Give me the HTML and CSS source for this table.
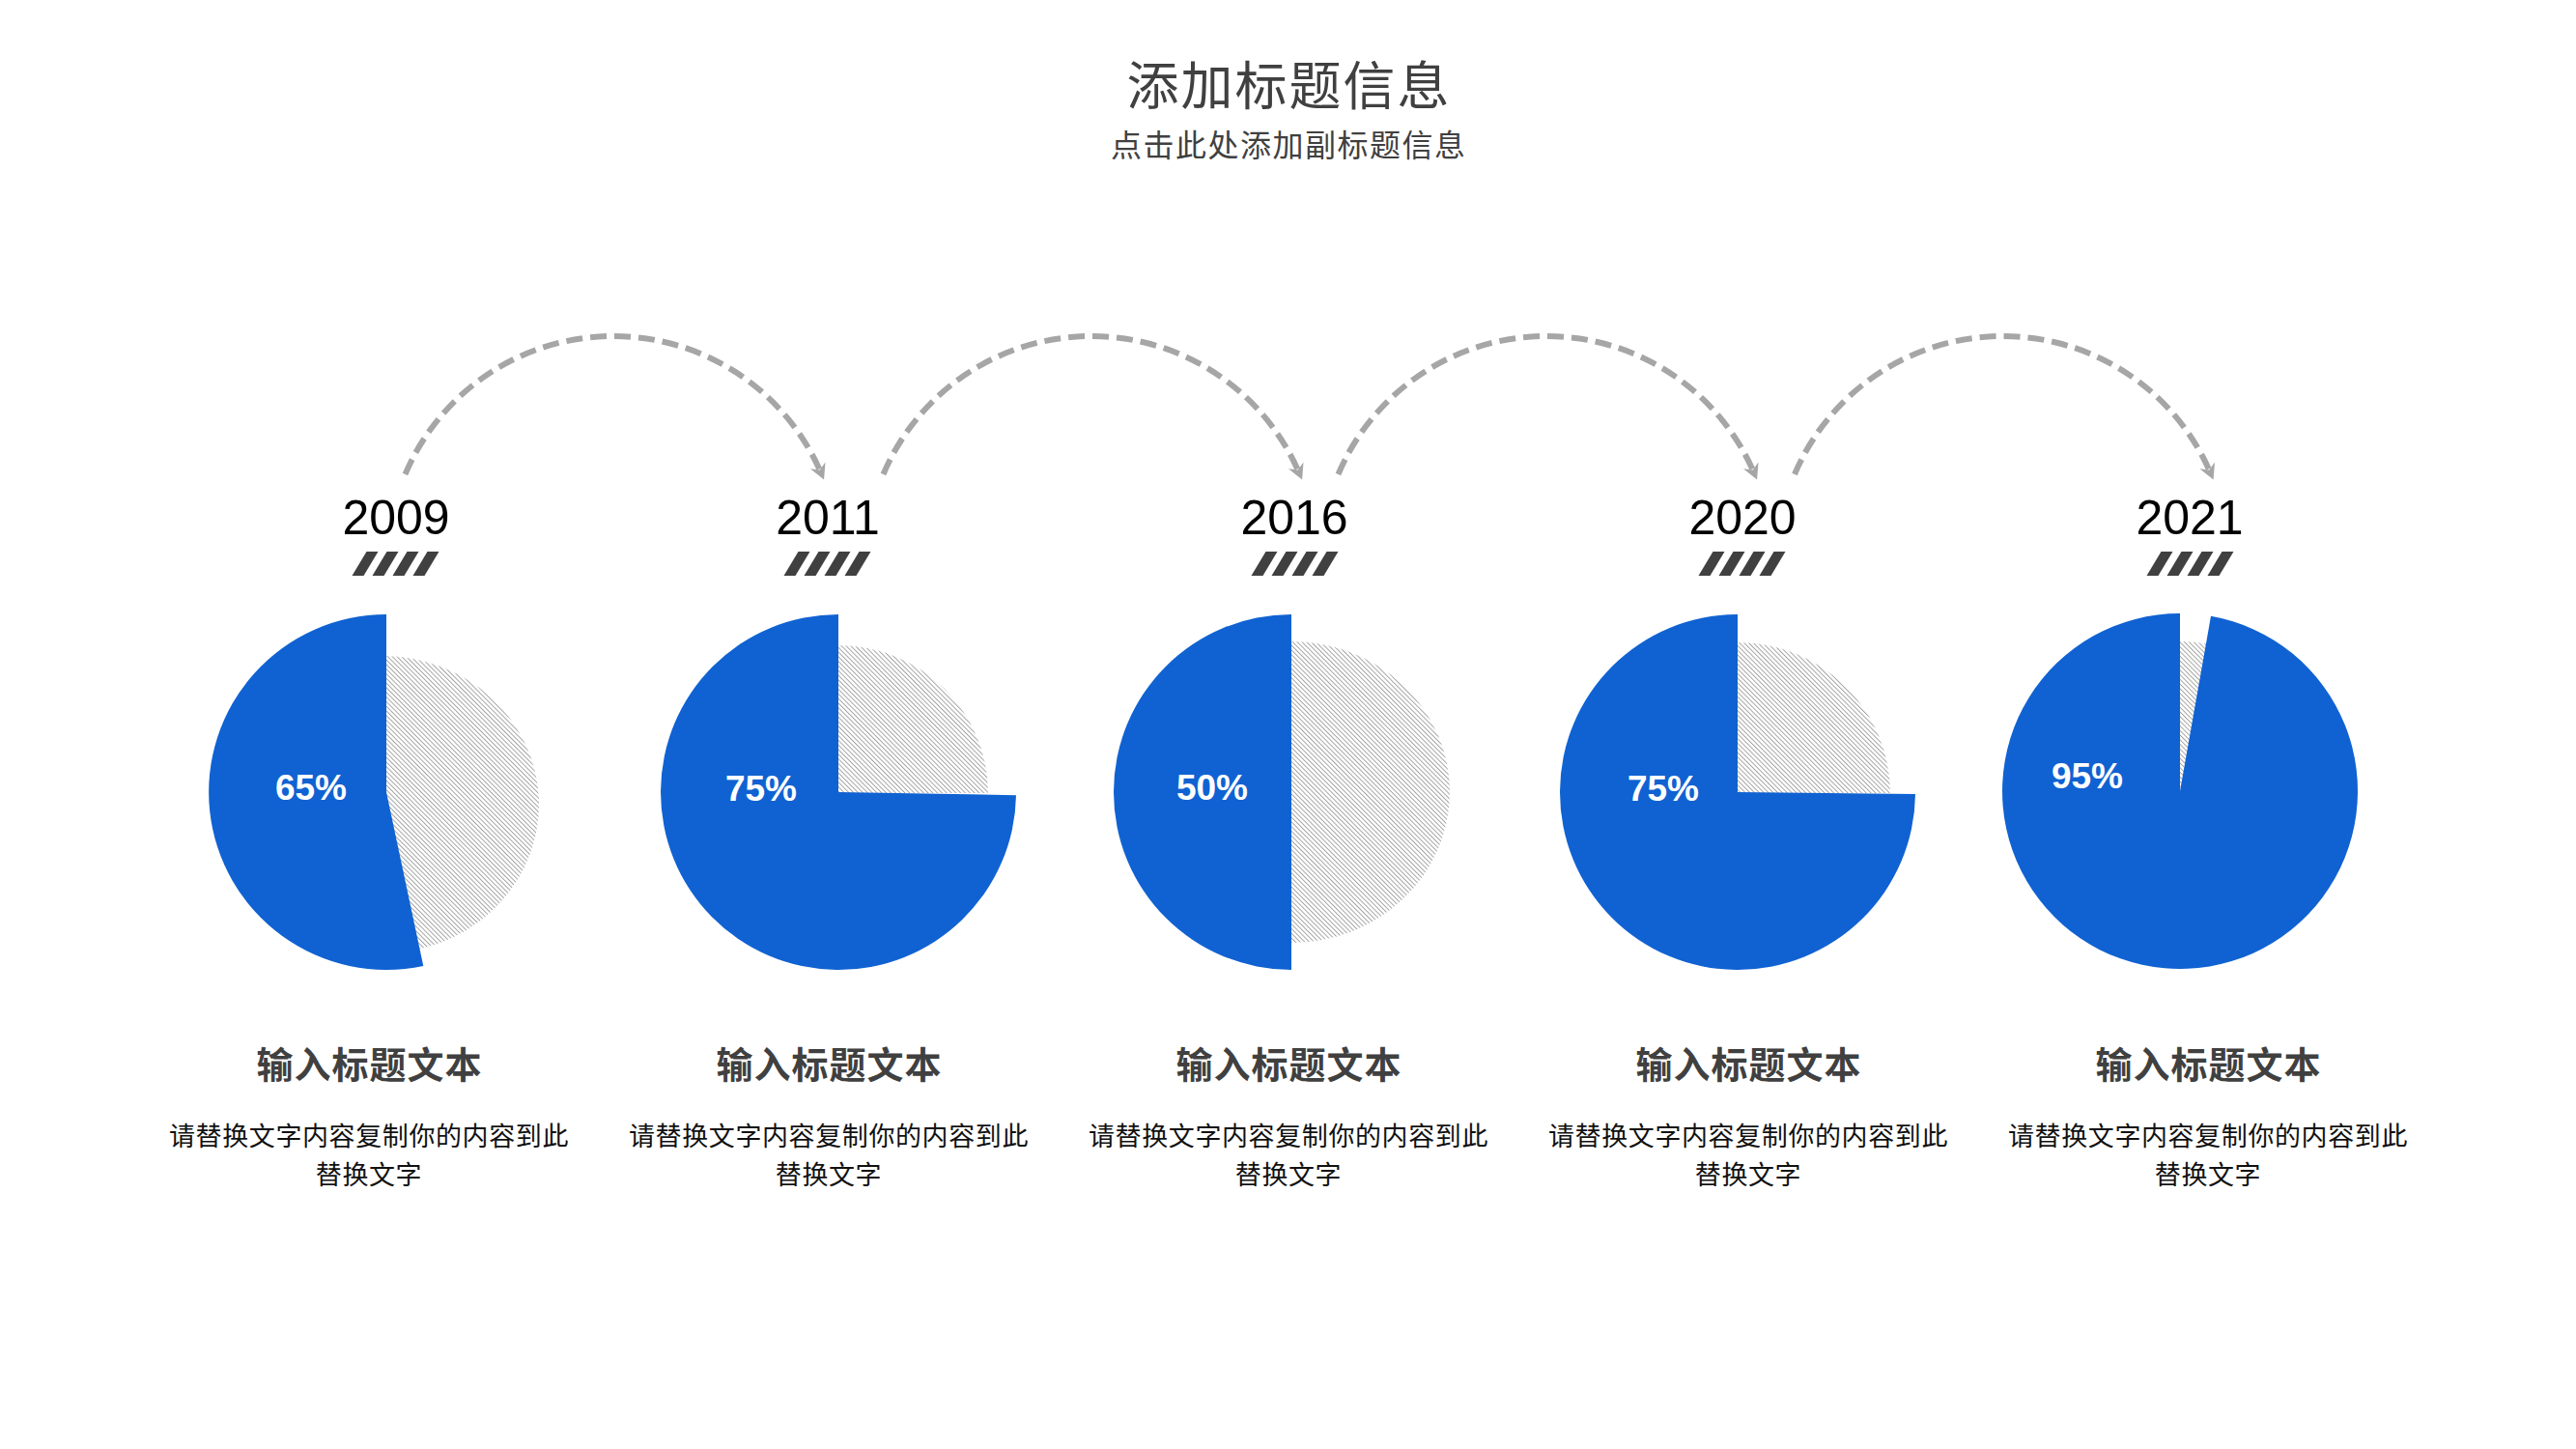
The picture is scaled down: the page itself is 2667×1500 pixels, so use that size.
FILE: index.html
```html
<!DOCTYPE html>
<html lang="zh-CN">
<head>
<meta charset="utf-8">
<title>添加标题信息</title>
<link rel="stylesheet" href="styles.css">
</head>
<body>
<main class="slide">
  <header class="head">
    <h1 class="title">添加标题信息</h1>
    <p class="subtitle">点击此处添加副标题信息</p>
  </header>

  <svg class="chart" width="2667" height="740" viewBox="0 300 2667 740" xmlns="http://www.w3.org/2000/svg">
    <defs>
      <pattern id="hatch" patternUnits="userSpaceOnUse" width="3.4" height="3.4" patternTransform="rotate(-45)">
        <line x1="0.5" y1="0" x2="0.5" y2="3.4" stroke="#8f8f8f" stroke-width="0.8"/>
      </pattern>
      <marker id="arrow" markerUnits="userSpaceOnUse" viewBox="-10 -10 20 20" markerWidth="20" markerHeight="20" refX="0" refY="0" orient="auto">
        <path d="M8 0 L-8 -8.5 L-3 0 L-8 8.5 Z" fill="#a6a6a6"/>
      </marker>
      <g id="stripes">
        <polygon points="-30.5,571 -18.5,571 -33.5,596 -45.5,596"/>
        <polygon points="-9.5,571 2.5,571 -12.5,596 -24.5,596"/>
        <polygon points="11.5,571 23.5,571 8.5,596 -3.5,596"/>
        <polygon points="32.5,571 44.5,571 29.5,596 17.5,596"/>
      </g>
    </defs>

    <g class="arcs">
      <path d="M419.5 491 A234 234 0 0 1 849.9 489.2"/>
      <path d="M914.5 491 A234 234 0 0 1 1344.9 489.2"/>
      <path d="M1385.5 491 A234 234 0 0 1 1815.9 489.2"/>
      <path d="M1858 491 A234 234 0 0 1 2288.4 489.2"/>
    </g>

    <g class="years">
      <text x="410" y="553">2009</text>
      <text x="857" y="553">2011</text>
      <text x="1340" y="553">2016</text>
      <text x="1804" y="553">2020</text>
      <text x="2267" y="553">2021</text>
    </g>

    <g class="stripes">
      <use href="#stripes" x="410"/>
      <use href="#stripes" x="857"/>
      <use href="#stripes" x="1341"/>
      <use href="#stripes" x="1804"/>
      <use href="#stripes" x="2268"/>
    </g>

    <g class="pies">
      <path class="rest" d="M400 833 L400 679 A162 154 0 0 1 414 986 Z"/>
      <path class="part" d="M400 820 L438.3 1000 A184 184 0 1 1 400 636 Z"/>

      <path class="rest" d="M868 821 L868 668 A155 153 0 0 1 1023 821 Z"/>
      <path class="part" d="M868 820 L1052 823.2 A184 184 0 1 1 868 636 Z"/>

      <path class="rest" d="M1337 820 L1337 664 A164 156 0 0 1 1337 976 Z"/>
      <path class="part" d="M1337 1004 A184 184 0 0 1 1337 636 Z"/>

      <path class="rest" d="M1799 821 L1799 665 A158 156 0 0 1 1957 821 Z"/>
      <path class="part" d="M1799 820 L1983 822 A184 184 0 1 1 1799 636 Z"/>

      <path class="rest" d="M2257 819 L2257 664 A155 155 0 0 1 2286.6 666.8 Z"/>
      <path class="part" d="M2257 819 L2289 637.8 A184 184 0 1 1 2257 635 Z"/>
    </g>

    <g class="pct">
      <text x="322" y="828">65%</text>
      <text x="788" y="829">75%</text>
      <text x="1255" y="828">50%</text>
      <text x="1722" y="829">75%</text>
      <text x="2161" y="816">95%</text>
    </g>
  </svg>

  <section class="items">
    <div class="item">
      <h2 class="item-title">输入标题文本</h2>
      <p class="item-text">请替换文字内容复制你的内容到此替换文字</p>
    </div>
    <div class="item">
      <h2 class="item-title">输入标题文本</h2>
      <p class="item-text">请替换文字内容复制你的内容到此替换文字</p>
    </div>
    <div class="item">
      <h2 class="item-title">输入标题文本</h2>
      <p class="item-text">请替换文字内容复制你的内容到此替换文字</p>
    </div>
    <div class="item">
      <h2 class="item-title">输入标题文本</h2>
      <p class="item-text">请替换文字内容复制你的内容到此替换文字</p>
    </div>
    <div class="item">
      <h2 class="item-title">输入标题文本</h2>
      <p class="item-text">请替换文字内容复制你的内容到此替换文字</p>
    </div>
  </section>
</main>
</body>
</html>
```

FILE: styles.css
```css
html, body {
  margin: 0;
  padding: 0;
  background: #ffffff;
}

.slide {
  width: 2667px;
  height: 1500px;
  overflow: hidden;
  font-family: "Noto Sans CJK SC", "Liberation Sans", sans-serif;
}

.head {
  padding-top: 54px;
  text-align: center;
}

.title {
  margin: 0;
  font-size: 54px;
  line-height: 64px;
  font-weight: 400;
  letter-spacing: 2px;
  padding-left: 2px;
  color: #404040;
}

.subtitle {
  margin: 10px 0 0;
  font-size: 32px;
  line-height: 40px;
  letter-spacing: 1.5px;
  padding-left: 1.5px;
  color: #404040;
}

.chart {
  display: block;
  margin-top: 132px;
}

.arcs path {
  fill: none;
  stroke: #a6a6a6;
  stroke-width: 6;
  stroke-dasharray: 17 8;
  marker-end: url(#arrow);
}

.years text {
  font-family: "Liberation Sans", Arial, sans-serif;
  font-size: 50px;
  fill: #000000;
  text-anchor: middle;
}

.stripes {
  fill: #404040;
}

.pies .part {
  fill: #1062d2;
}

.pies .rest {
  fill: url(#hatch);
}

.pct text {
  font-family: "Liberation Sans", Arial, sans-serif;
  font-weight: 700;
  font-size: 37px;
  fill: #ffffff;
  text-anchor: middle;
}

.items {
  display: grid;
  grid-template-columns: repeat(5, 1fr);
  width: 2380px;
  margin: 35px 0 0 144px;
}

.item {
  display: flex;
  flex-direction: column;
  align-items: center;
  text-align: center;
}

.item-title {
  margin: 0;
  font-size: 38px;
  line-height: 50px;
  font-weight: 700;
  letter-spacing: 1px;
  padding-left: 1px;
  color: #404040;
}

.item-text {
  margin: 30px 0 0;
  max-width: 425px;
  font-size: 27px;
  line-height: 40px;
  letter-spacing: 0.6px;
  color: #111111;
}
```
